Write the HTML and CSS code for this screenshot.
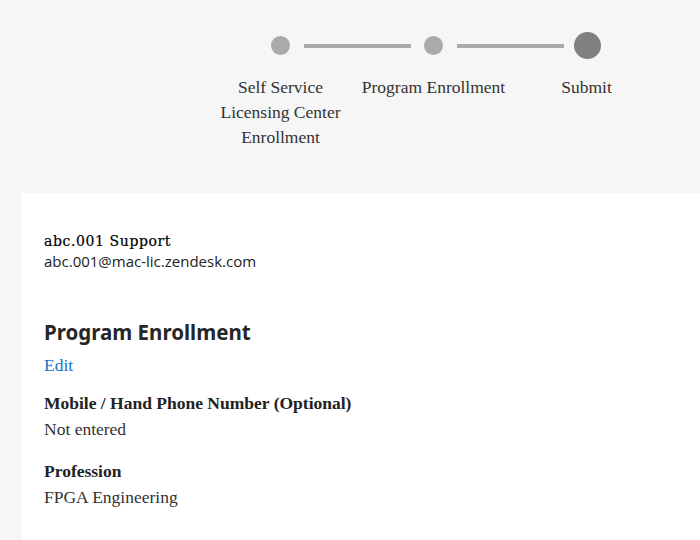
FILE: index.html
```html
<!DOCTYPE html>
<html lang="en">
<head>
  <meta charset="UTF-8">
  <meta name="viewport" content="width=device-width, initial-scale=1.0">
  <title>Enrollment - Submit</title>
  <link rel="stylesheet" href="styles.css">
</head>
<body>
  <div class="progress">
    <div class="track">
      <span class="dot"></span>
      <span class="bar"></span>
      <span class="dot"></span>
      <span class="bar bar-last"></span>
      <span class="dot dot-current"></span>
    </div>
    <div class="steps">
      <div class="step">Self Service Licensing Center Enrollment</div>
      <div class="step">Program Enrollment</div>
      <div class="step">Submit</div>
    </div>
  </div>

  <div class="card">
    <div class="user-name">abc.001 Support</div>
    <div class="user-email">abc.001@mac-lic.zendesk.com</div>

    <h2>Program Enrollment</h2>
    <a class="edit-link" href="#">Edit</a>

    <div class="field">
      <div class="field-label">Mobile / Hand Phone Number (Optional)</div>
      <div class="field-value">Not entered</div>
    </div>

    <div class="field">
      <div class="field-label">Profession</div>
      <div class="field-value">FPGA Engineering</div>
    </div>
  </div>
</body>
</html>
```

FILE: styles.css
```css
body {
  margin: 0;
  background-color: #f6f6f6;
  font-family: "Liberation Serif", "Times New Roman", serif;
  color: #333;
}

.progress {
  height: 193px;
  box-sizing: border-box;
  padding-top: 32px;
}

.track {
  display: flex;
  align-items: center;
  height: 27px;
  padding-left: 271px;
}

.dot {
  width: 19px;
  height: 19px;
  border-radius: 50%;
  background-color: #aaa;
}

.dot-current {
  width: 27px;
  height: 27px;
  background-color: #808080;
}

.bar {
  width: 107px;
  height: 4px;
  margin: 0 13px 0 14px;
  background-color: #aaa;
}

.bar-last {
  margin: 0 10px 0 14px;
}

.steps {
  display: grid;
  grid-template-columns: repeat(3, 153px);
  margin-top: 16px;
  padding-left: 204px;
}

.step {
  text-align: center;
  font-size: 17.5px;
  line-height: 25px;
}

.card {
  margin-left: 22px;
  min-height: 347px;
  box-sizing: border-box;
  padding: 39px 22px 0;
  background-color: #fff;
}

.user-name {
  font-family: "DejaVu Serif", serif;
  font-size: 14px;
  letter-spacing: 0.6px;
  line-height: 18px;
  color: #000;
  -webkit-text-stroke: 0.2px #000;
}

.user-email {
  margin-top: 2px;
  font-family: "Open Sans", sans-serif;
  font-size: 15px;
  line-height: 18px;
  color: #222;
}

h2 {
  margin: 48px 0 7px;
  font-family: "Noto Sans", sans-serif;
  font-size: 20.5px;
  font-weight: 700;
  line-height: 28px;
  color: #262626;
}

.edit-link {
  display: block;
  font-size: 17.5px;
  line-height: 25px;
  color: #1a73c9;
  text-decoration: none;
}

.field {
  margin-top: 12px;
  font-size: 17.5px;
  line-height: 26px;
}

.field + .field {
  margin-top: 16px;
}

.field-label {
  font-weight: bold;
  color: #222;
}
```
